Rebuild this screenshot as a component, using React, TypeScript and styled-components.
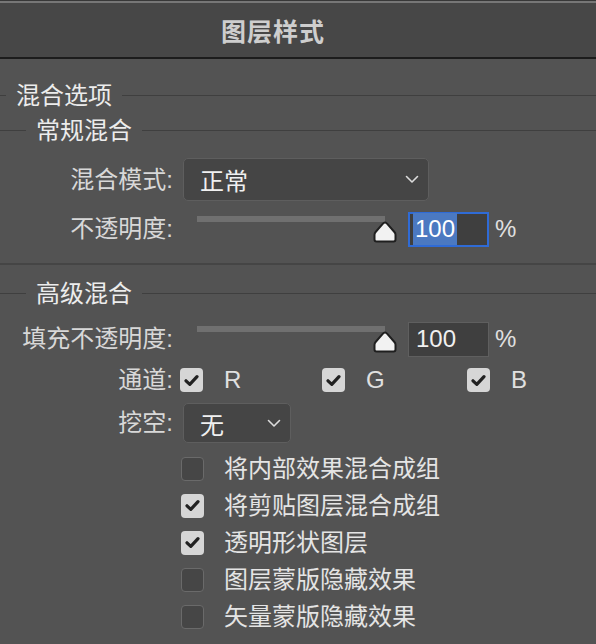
import React, {useState} from 'react';
import styled, {createGlobalStyle} from 'styled-components';

const GlobalStyle = createGlobalStyle`
    html, body {
        margin: 0;
        padding: 0;
        background: #535353;
    }
    body {
        font-family: "Liberation Sans", "Noto Sans CJK SC", sans-serif;
    }
`;

const Panel = styled.div`
    width: 596px;
    height: 644px;
    background: #535353;
    border-top: 1px solid #383838;
    box-sizing: border-box;
    overflow: hidden;
    color: #dcdcdc;
`;

const Header = styled.header`
    height: 54px;
    background: #474747;
    border-top: 2px solid #777777;
    border-bottom: 2px solid #1c1c1c;
    display: flex;
    align-items: center;
    justify-content: center;
    padding-right: 50px;
    font-family: "Noto Sans CJK SC", sans-serif;
    font-weight: 700;
    font-size: 25px;
    color: #cecece;
    letter-spacing: 1px;
`;

const Body = styled.div`
    padding-top: 19px;
    display: flex;
    flex-direction: column;
`;

const Legend = styled.div<{ $lead: number }>`
    display: flex;
    align-items: center;
    height: 35px;
    font-size: 24px;
    color: #ececec;
    line-height: 1;

    &::before {
        content: '';
        width: ${p => p.$lead}px;
        height: 1px;
        background: #3f3f3f;
    }

    &::after {
        content: '';
        flex: 1;
        height: 1px;
        background: #3f3f3f;
    }

    span {
        padding: 0 10px;
    }
`;

const Row = styled.div<{ $top: number; $h: number }>`
    display: flex;
    align-items: center;
    height: ${p => p.$h}px;
    margin-top: ${p => p.$top}px;
`;

const Label = styled.div`
    width: 173px;
    text-align: right;
    font-size: 24px;
    line-height: 1;
    color: #d8d8d8;
    flex-shrink: 0;
`;

const Select = styled.div<{ $w: number; $h: number }>`
    margin-left: 10px;
    width: ${p => p.$w}px;
    height: ${p => p.$h}px;
    box-sizing: border-box;
    background: #454545;
    border: 1.5px solid #5e5e5e;
    border-radius: 5px;
    display: flex;
    align-items: center;
    justify-content: space-between;
    padding: 0 9px 0 16px;
    font-size: 24px;
    color: #f0f0f0;
`;

const Slider = styled.div`
    position: relative;
    margin-left: 24px;
    width: 200px;
    height: 30px;
    align-self: flex-start;
    margin-top: 6px;
`;

const Track = styled.div`
    width: 188px;
    height: 6px;
    background: #707070;
`;

const Thumb = styled.svg`
    position: absolute;
    left: 176px;
    top: 5px;
`;

const NumberBox = styled.div<{ $focused?: boolean }>`
    margin-left: 11px;
    width: 81px;
    height: 35px;
    box-sizing: border-box;
    background: #3f3f3f;
    border: ${p => p.$focused ? '2px solid #2f6bd6' : '1.5px solid #5f5f5f'};
    display: flex;
    align-items: center;
    padding-left: 3px;
    font-size: 24px;
    color: #f0f0f0;
`;

const Selected = styled.span`
    background: #4b79c1;
    color: #ffffff;
    padding: 2px 2px;
    line-height: 1.2;
`;

const Plain = styled.span`
    padding-left: 4px;
`;

const Percent = styled.span`
    margin-left: 6px;
    font-size: 24px;
    color: #e0e0e0;
`;

const Separator = styled.div`
    height: 2px;
    background: #454545;
    margin-top: 15px;
`;

const Box = styled.span<{ $checked: boolean }>`
    width: 23px;
    height: 24px;
    box-sizing: border-box;
    border-radius: 4px;
    flex-shrink: 0;
    display: flex;
    align-items: center;
    justify-content: center;
    background: ${p => p.$checked ? '#d6d6d6' : '#464646'};
    border: ${p => p.$checked ? 'none' : '1.5px solid #6a6a6a'};
    cursor: pointer;
`;

const Channels = styled.div`
    display: flex;
    margin-left: 7px;
`;

const Channel = styled.label`
    width: 142px;
    display: flex;
    align-items: center;
    gap: 21px;
    font-size: 24px;
    color: #e0e0e0;
    &:last-child {
        width: auto;
    }
    &:nth-child(2) {
        width: 145px;
    }
`;

const OptionList = styled.div`
    display: flex;
    flex-direction: column;
    margin-top: 7px;
    padding-left: 181px;
`;

const Option = styled.label`
    display: flex;
    align-items: center;
    height: 37px;
    gap: 20px;
    font-size: 24px;
    color: #e4e4e4;
    line-height: 1;
`;

const Chevron = () => (
    <svg width="14" height="9" viewBox="0 0 14 9">
        <path d="M1.5 1.5 L7 7 L12.5 1.5" fill="none" stroke="#dcdcdc" strokeWidth="1.6" strokeLinecap="round"
              strokeLinejoin="round"/>
    </svg>
);

const Check = () => (
    <svg width="15" height="13" viewBox="0 0 15 13">
        <path d="M2 6.8 L5.8 10.4 L13 2.6" fill="none" stroke="#222222" strokeWidth="3.2" strokeLinecap="round"
              strokeLinejoin="round"/>
    </svg>
);

const SliderThumb = () => (
    <Thumb width="24" height="22" viewBox="0 0 24 22">
        <path d="M12 1.5 C13 1.5 13.6 2 14.3 2.8 L21.4 11 C22.2 11.9 22.5 12.7 22.5 13.8 L22.5 18.5 C22.5 19.7 21.7 20.5 20.5 20.5 L3.5 20.5 C2.3 20.5 1.5 19.7 1.5 18.5 L1.5 13.8 C1.5 12.7 1.8 11.9 2.6 11 L9.7 2.8 C10.4 2 11 1.5 12 1.5 Z"
              fill="#f2f2f2" stroke="#1f1f1f" strokeWidth="2"/>
    </Thumb>
);

const CheckBox = ({checked, onClick}: { checked: boolean; onClick: () => void }) => (
    <Box $checked={checked} onClick={onClick}>
        {checked && <Check/>}
    </Box>
);

const App = () => {
    const [channels, setChannels] = useState<boolean[]>([true, true, true]);
    const [options, setOptions] = useState<boolean[]>([false, true, true, false, false]);

    const optionLabels = ['将内部效果混合成组', '将剪贴图层混合成组', '透明形状图层', '图层蒙版隐藏效果', '矢量蒙版隐藏效果'];

    const toggleChannel = (i: number) => {
        setChannels(channels.map((c, idx) => idx === i ? !c : c));
    };
    const toggleOption = (i: number) => {
        setOptions(options.map((c, idx) => idx === i ? !c : c));
    };

    return (
        <Panel>
            <GlobalStyle/>
            <Header>图层样式</Header>
            <Body>
                <Legend $lead={6}><span>混合选项</span></Legend>
                <Legend $lead={26}><span>常规混合</span></Legend>

                <Row $top={10} $h={43}>
                    <Label>混合模式:</Label>
                    <Select $w={246} $h={43}>
                        <span>正常</span>
                        <Chevron/>
                    </Select>
                </Row>

                <Row $top={9} $h={38}>
                    <Label>不透明度:</Label>
                    <Slider>
                        <Track/>
                        <SliderThumb/>
                    </Slider>
                    <NumberBox $focused>
                        <Selected>100</Selected>
                    </NumberBox>
                    <Percent>%</Percent>
                </Row>

                <Separator/>

                <Legend $lead={26} style={{marginTop: 11}}><span>高级混合</span></Legend>

                <Row $top={9} $h={38}>
                    <Label>填充不透明度:</Label>
                    <Slider>
                        <Track/>
                        <SliderThumb/>
                    </Slider>
                    <NumberBox>
                        <Plain>100</Plain>
                    </NumberBox>
                    <Percent>%</Percent>
                </Row>

                <Row $top={5} $h={34}>
                    <Label>通道:</Label>
                    <Channels>
                        {['R', 'G', 'B'].map((c, i) => (
                            <Channel key={c}>
                                <CheckBox checked={channels[i]} onClick={() => toggleChannel(i)}/>
                                {c}
                            </Channel>
                        ))}
                    </Channels>
                </Row>

                <Row $top={6} $h={40}>
                    <Label>挖空:</Label>
                    <Select $w={108} $h={40}>
                        <span>无</span>
                        <Chevron/>
                    </Select>
                </Row>

                <OptionList>
                    {optionLabels.map((text, i) => (
                        <Option key={text}>
                            <CheckBox checked={options[i]} onClick={() => toggleOption(i)}/>
                            {text}
                        </Option>
                    ))}
                </OptionList>
            </Body>
        </Panel>
    );
};

export default App;
